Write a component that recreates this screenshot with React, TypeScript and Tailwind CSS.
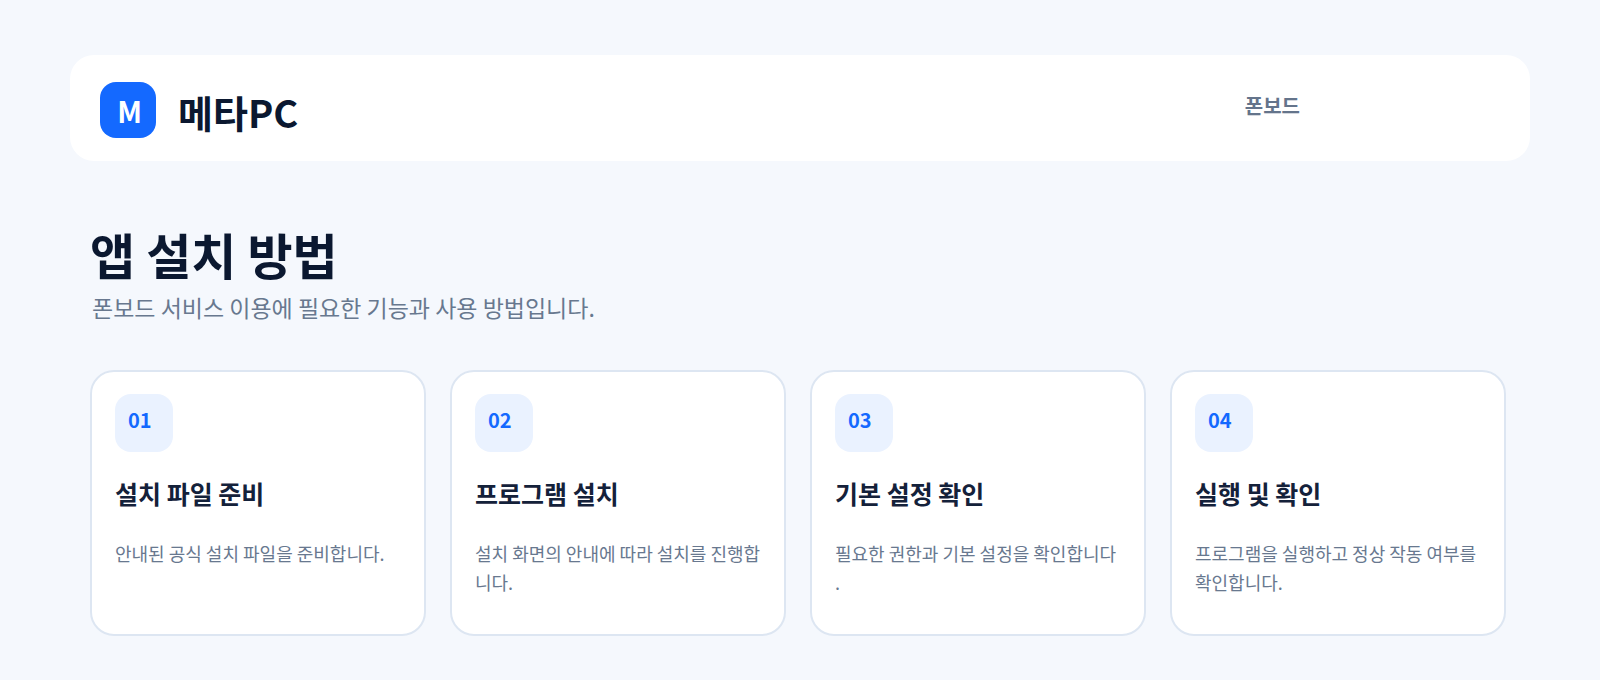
const steps = [
  { number: '01', title: '설치 파일 준비', lines: ['안내된 공식 설치 파일을 준비합니다.'] },
  { number: '02', title: '프로그램 설치', lines: ['설치 화면의 안내에 따라 설치를 진행합', '니다.'] },
  { number: '03', title: '기본 설정 확인', lines: ['필요한 권한과 기본 설정을 확인합니다', '.'] },
  { number: '04', title: '실행 및 확인', lines: ['프로그램을 실행하고 정상 작동 여부를', '확인합니다.'] },
];

export default function App() {
  return (
    <div className="min-h-screen bg-[#f5f8fd] pt-[55px] pb-11 font-['Noto_Sans_CJK_KR','Noto_Sans',sans-serif] text-[#0b1830]">
      {/* Header */}
      <header className="mx-[70px] flex items-start justify-between rounded-3xl bg-white pt-[27px] pr-[230px] pb-[23px] pl-[30px]">
        <a href="#" className="flex items-center gap-[22px]">
          <span className="flex h-14 w-14 items-center justify-center rounded-2xl bg-[#1469ff] pl-[3px] text-[29px] leading-none font-bold text-white">
            M
          </span>
          <span className="pt-1 text-[38px] leading-[52px] font-bold">메타PC</span>
        </a>
        <nav className="pt-2">
          <a href="#" className="block text-xl leading-8 font-bold text-[#64748b]">
            폰보드
          </a>
        </nav>
      </header>

      <main className="pr-[94px] pl-[90px]">
        {/* Page title */}
        <section className="pt-[60px]">
          <h1 className="text-[49px] leading-[66px] font-bold">앱 설치 방법</h1>
          <p className="pt-[2px] pl-[2px] text-[23px] leading-9 text-[#68788f]">
            폰보드 서비스 이용에 필요한 기능과 사용 방법입니다.
          </p>
        </section>

        {/* Install steps */}
        <section className="grid grid-cols-4 gap-6 pt-[45px]">
          {steps.map((step) => (
            <article
              key={step.number}
              className="min-h-[266px] rounded-3xl border-2 border-[#dde6f2] bg-white px-[23px] pt-[22px] pb-5"
            >
              <div className="h-[58px] w-[58px] rounded-2xl bg-[#eaf2ff] pt-3 pl-[13px] text-xl leading-7 font-bold text-[#1469ff]">
                {step.number}
              </div>
              <h2 className="pt-[23px] text-[25px] leading-9 font-bold text-[#14213a]">{step.title}</h2>
              <p className="pt-7 text-lg leading-[29px] whitespace-nowrap text-[#68788f]">
                {step.lines.map((line) => (
                  <span key={line} className="block">
                    {line}
                  </span>
                ))}
              </p>
            </article>
          ))}
        </section>
      </main>
    </div>
  );
}
